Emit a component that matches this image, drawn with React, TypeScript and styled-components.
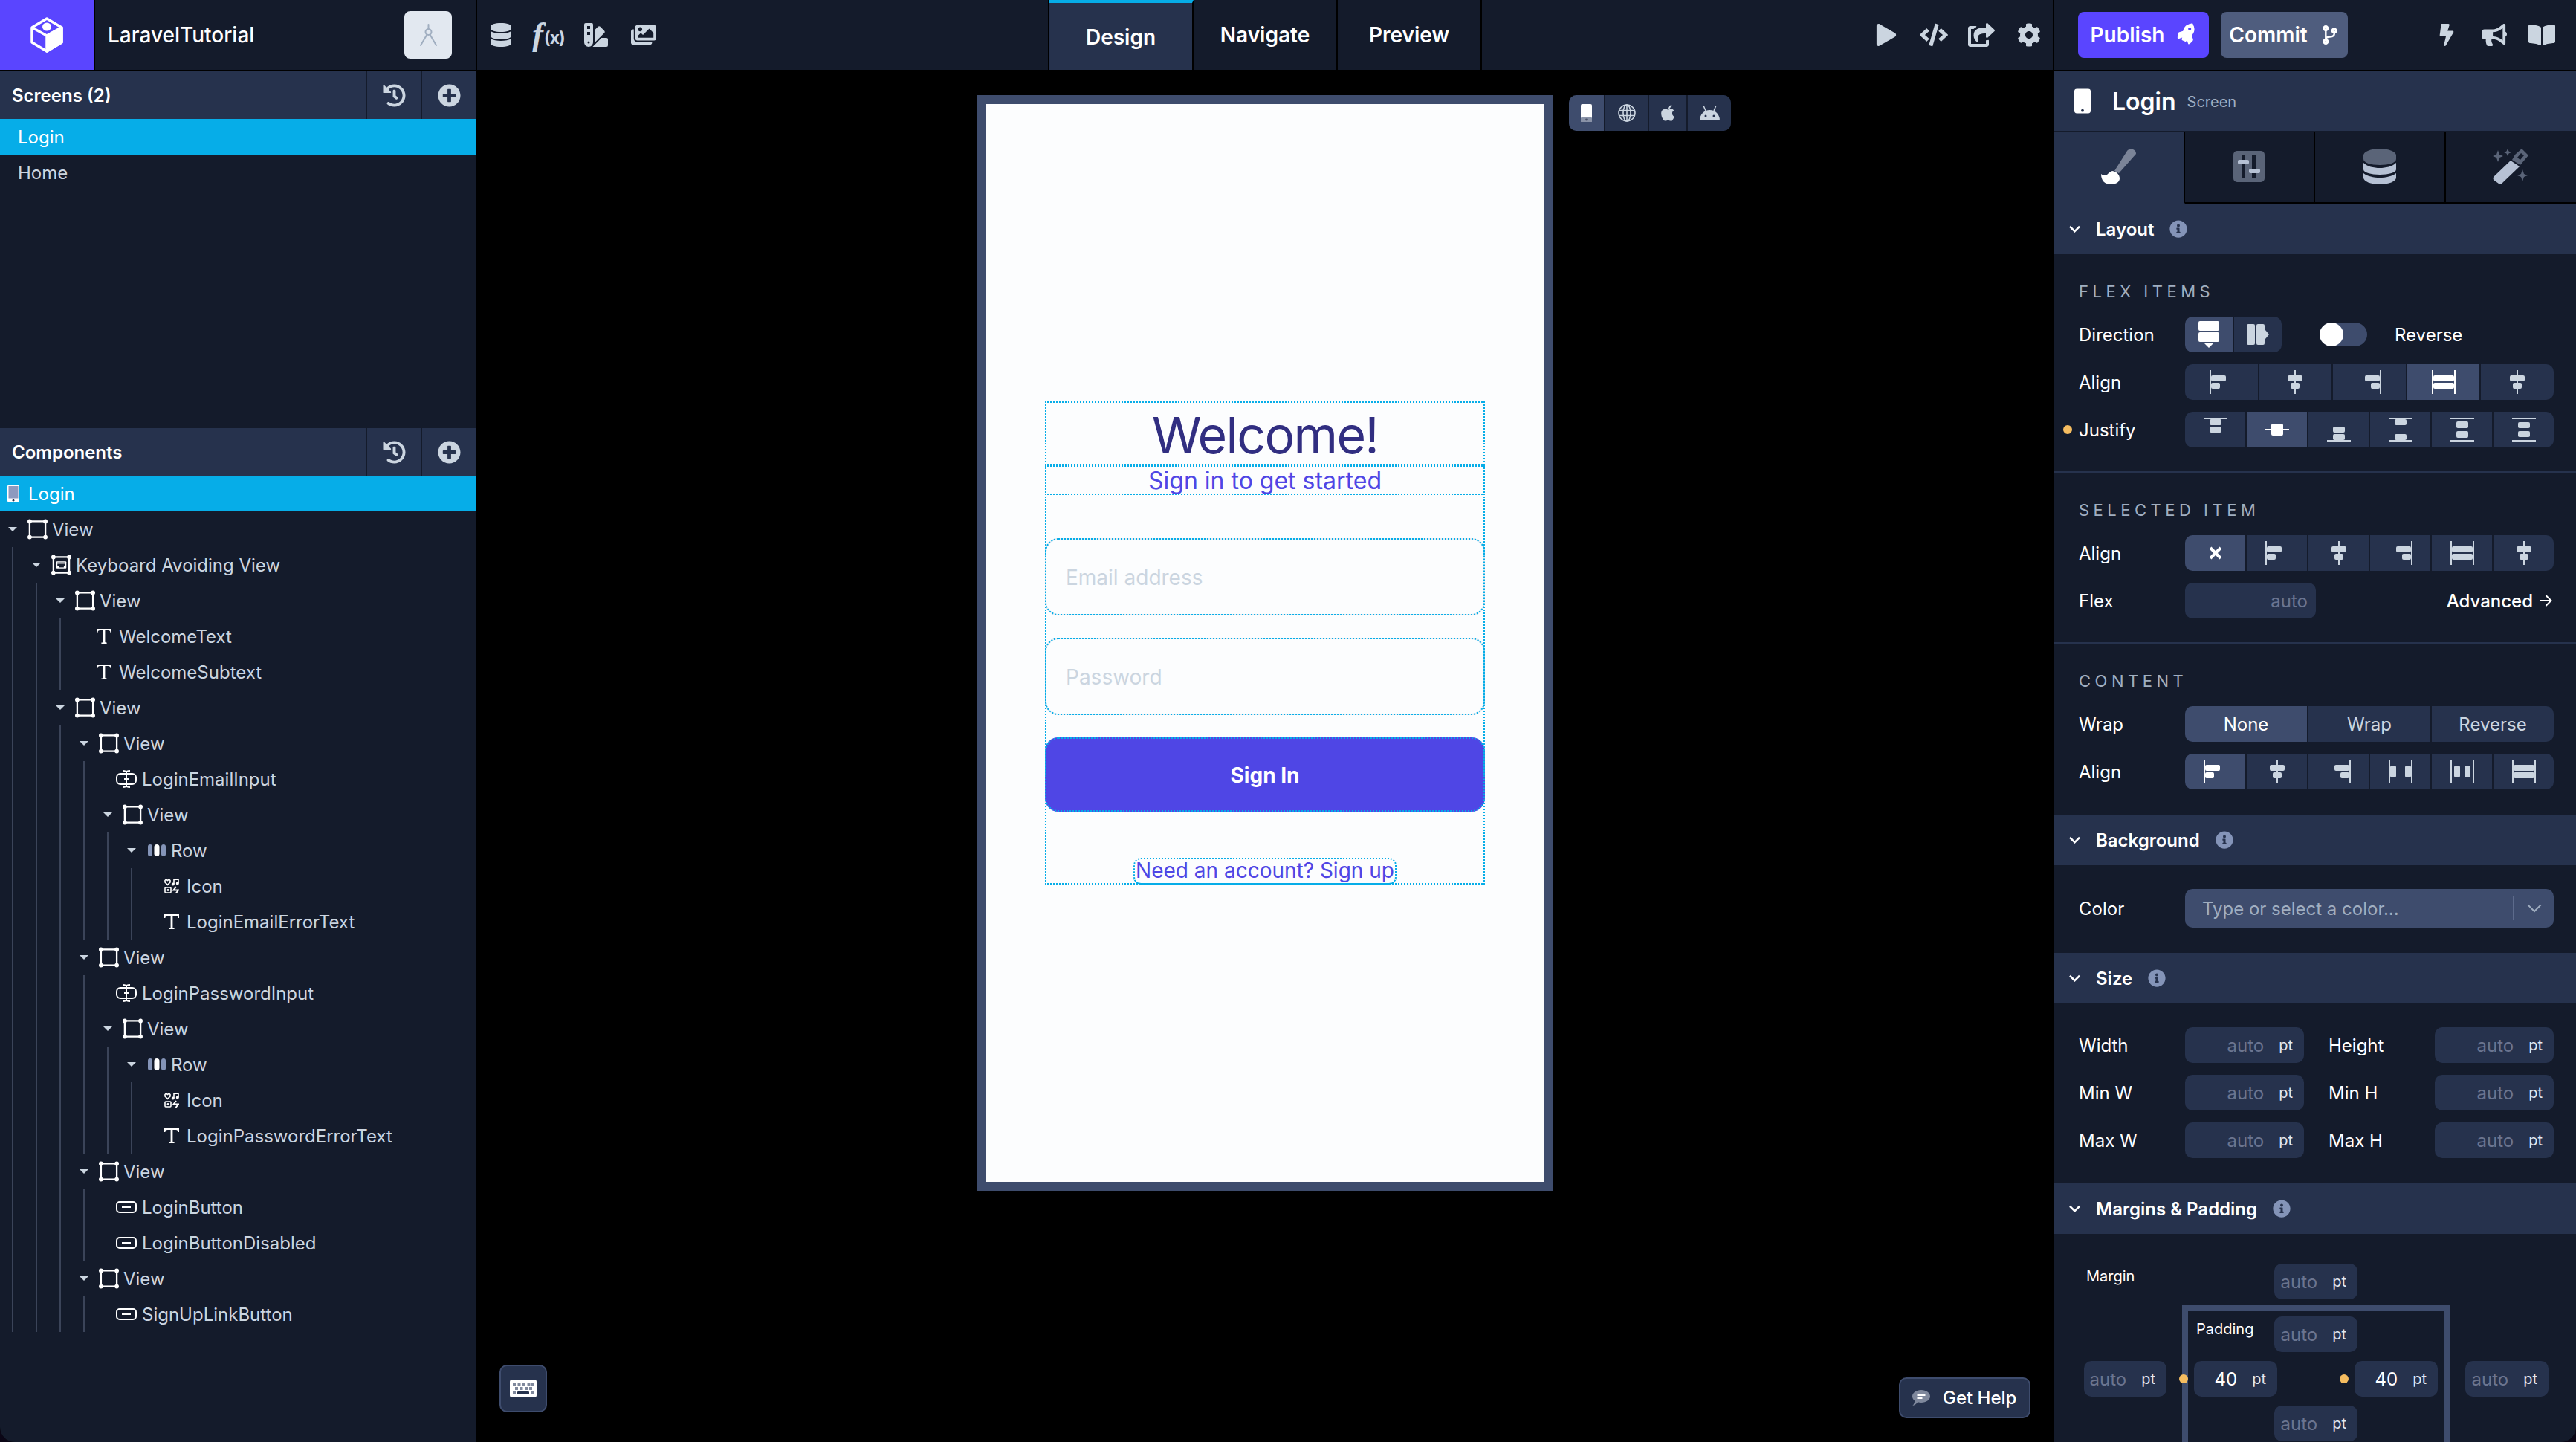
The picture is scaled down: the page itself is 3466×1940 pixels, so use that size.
import React, { ReactNode } from 'react'
import styled, { createGlobalStyle, css } from 'styled-components'
import {
  FaApple,
  FaBolt,
  FaBookOpen,
  FaBullhorn,
  FaCodeBranch,
  FaCode,
  FaCog,
  FaDatabase,
  FaHistory,
  FaImages,
  FaInfoCircle,
  FaPlay,
  FaPlusCircle,
  FaRocket,
  FaShareSquare,
  FaSwatchbook,
} from 'react-icons/fa'

const DARK = '#141b2b'
const MID = '#26324d'
const LIGHT = '#3e4c6d'
const CYAN = '#06ade8'
const SOFT = '#cbd5e0'
const INDIGO = '#4f46e5'
const AMBER = '#f6bd60'

const GlobalStyle = createGlobalStyle`
  html, body {
    margin: 0;
    padding: 0;
    background: #0b0616;
    overflow: hidden;
  }
  * {
    box-sizing: border-box;
  }
  body {
    font-family: Inter, "Noto Sans", sans-serif;
    color: #fff;
  }
`

const Page = styled.div`
  width: 3466px;
  height: 1940px;
  background: #000;
  display: flex;
  flex-direction: column;
  gap: 2px;
  overflow: hidden;
  border-radius: 0 0 20px 20px;
`

/* top bar */

const TopBar = styled.div`
  height: 94px;
  display: flex;
  gap: 2px;
  flex-shrink: 0;
`

const LogoCell = styled.div`
  width: 126px;
  background: #5a45ff;
  display: flex;
  align-items: center;
  justify-content: center;
`

const BrandCell = styled.div`
  width: 512px;
  background: ${DARK};
  display: flex;
  align-items: center;
  justify-content: space-between;
  padding: 0 32px 0 17px;
  font-size: 28px;
  font-weight: 500;
`

const Avatar = styled.div`
  width: 64px;
  height: 64px;
  border-radius: 8px;
  background: #e2e8f0;
  display: flex;
  align-items: center;
  justify-content: center;
`

const ToolsCell = styled.div`
  width: 2120px;
  background: ${DARK};
  display: flex;
  align-items: stretch;
`

const IconGroup = styled.div<{ $width?: number }>`
  display: flex;
  align-items: center;
  color: ${SOFT};
  ${(p) => p.$width && `width: ${p.$width}px;`}
`

const BarIcon = styled.div`
  width: 64px;
  height: 94px;
  display: flex;
  align-items: center;
  justify-content: center;
`

const FxIcon = styled.span`
  display: flex;
  align-items: center;
  font-family: "Liberation Serif", serif;
  font-style: italic;
  font-weight: 700;
  font-size: 44px;
  line-height: 1;
  span {
    font-family: Inter, sans-serif;
    font-style: normal;
    font-size: 23px;
    font-weight: 700;
    letter-spacing: -1px;
    margin: 8px 0 0 1px;
  }
`

const Tabs = styled.div`
  display: flex;
  border-left: 2px solid #000;
`

const Tab = styled.div<{ $active?: boolean }>`
  width: 194px;
  border-right: 2px solid #000;
  display: flex;
  align-items: center;
  justify-content: center;
  font-size: 28px;
  font-weight: 600;
  ${(p) =>
    p.$active &&
    css`
      background: ${MID};
      border-top: 4px solid ${CYAN};
      padding-top: 2px;
    `}
`

const Spacer = styled.div`
  flex: 1;
`

const PublishCell = styled.div`
  width: 702px;
  background: ${DARK};
  display: flex;
  align-items: center;
  padding: 0 14px 0 32px;
`

const ActionButton = styled.div<{ $width: number; $color: string }>`
  width: ${(p) => p.$width}px;
  height: 62px;
  border-radius: 8px;
  background: ${(p) => p.$color};
  display: flex;
  align-items: center;
  justify-content: center;
  gap: 17px;
  font-size: 28px;
  font-weight: 600;
  margin-right: 16px;
`

const Rocket = styled(FaRocket)`
  transform: rotate(-18deg);
`

/* main area */

const Body = styled.div`
  flex: 1;
  display: flex;
  min-height: 0;
`

const LeftPanel = styled.div`
  width: 640px;
  background: ${DARK};
  display: flex;
  flex-direction: column;
`

const PanelHeader = styled.div`
  height: 64px;
  background: ${MID};
  display: flex;
  flex-shrink: 0;
  font-size: 24px;
  font-weight: 600;
`

const PanelTitle = styled.div`
  flex: 1;
  display: flex;
  align-items: center;
  padding-left: 16px;
`

const PanelAction = styled.div`
  width: 74px;
  border-left: 2px solid ${DARK};
  display: flex;
  align-items: center;
  justify-content: center;
  color: ${SOFT};
`

const ScreensList = styled.div`
  height: 416px;
`

const ScreenRow = styled.div<{ $active?: boolean }>`
  height: 48px;
  display: flex;
  align-items: center;
  padding-left: 24px;
  font-size: 24px;
  color: ${(p) => (p.$active ? '#fff' : SOFT)};
  background: ${(p) => (p.$active ? CYAN : 'transparent')};
`

const RootRow = styled(ScreenRow)`
  padding-left: 10px;
  gap: 12px;
`

const TreeRow = styled.div`
  height: 48px;
  display: flex;
  align-items: center;
  font-size: 24px;
  color: ${SOFT};
  white-space: nowrap;
`

const Caret = styled.span`
  width: 0;
  height: 0;
  margin: 0 14px 0 11px;
  border-left: 6px solid transparent;
  border-right: 6px solid transparent;
  border-top: 6px solid ${SOFT};
  flex-shrink: 0;
`

const BranchIcon = styled.span`
  width: 27px;
  margin-right: 6px;
  display: flex;
  justify-content: center;
`

const LeafIcon = styled.span<{ $inset: number; $wide?: boolean }>`
  margin-left: ${(p) => p.$inset}px;
  margin-right: ${(p) => (p.$wide ? 7 : 10)}px;
  display: flex;
`

const TreeChildren = styled.div`
  margin-left: 16px;
  padding-left: 14px;
  border-left: 2px solid #3b4459;
`

/* canvas */

const Canvas = styled.div`
  flex: 1;
  position: relative;
  display: flex;
  justify-content: center;
  align-items: flex-start;
  padding-top: 32px;
`

const Phone = styled.div`
  position: relative;
  width: 774px;
  height: 1474px;
  border: 12px solid ${LIGHT};
  background: #fcfdfe;
  display: flex;
  flex-direction: column;
  justify-content: center;
  padding: 0 79px;
`

const Dotted = css`
  outline: 2px dotted ${CYAN};
  outline-offset: -2px;
`

const Container = styled.div`
  ${Dotted}
  height: 650px;
  display: flex;
  flex-direction: column;
  align-items: stretch;
`

const TitleBox = styled.div`
  ${Dotted}
  height: 86px;
  display: flex;
  align-items: center;
  justify-content: center;
  font-size: 68px;
  letter-spacing: -1.7px;
  color: #312e81;
  padding-top: 4px;
`

const SubtitleBox = styled.div`
  ${Dotted}
  height: 40px;
  margin-bottom: 58px;
  display: flex;
  align-items: center;
  justify-content: center;
  font-size: 32px;
  color: ${INDIGO};
`

const Field = styled.div`
  ${Dotted}
  height: 104px;
  margin-bottom: 30px;
  border: 2px solid #e8edf3;
  border-radius: 18px;
  display: flex;
  align-items: center;
  padding-left: 26px;
  padding-top: 2px;
  font-size: 28px;
  color: #cbd5e0;
`

const Submit = styled.div`
  ${Dotted}
  height: 100px;
  margin-bottom: 62px;
  background: ${INDIGO};
  border-radius: 18px;
  display: flex;
  align-items: center;
  justify-content: center;
  padding-top: 2px;
  font-size: 28px;
  font-weight: 700;
  color: #fff;
`

const LinkBox = styled.div`
  ${Dotted}
  align-self: center;
  width: 354px;
  height: 36px;
  border-radius: 10px;
  border-bottom: 2px solid ${CYAN};
  display: flex;
  align-items: center;
  justify-content: center;
  font-size: 28px;
  color: ${INDIGO};
  white-space: nowrap;
`

const DeviceBar = styled.div`
  position: absolute;
  top: -12px;
  left: calc(100% + 34px);
  width: 218px;
  height: 48px;
  display: grid;
  grid-template-columns: 47px 57px 50px 58px;
  gap: 2px;
  border-radius: 10px;
  overflow: hidden;
  background: ${DARK};
`

const DeviceButton = styled.div<{ $active?: boolean }>`
  display: flex;
  align-items: center;
  justify-content: center;
  color: ${SOFT};
  background: ${(p) => (p.$active ? LIGHT : MID)};
`

const KeyboardButton = styled.div`
  position: absolute;
  left: 32px;
  bottom: 40px;
  width: 64px;
  height: 64px;
  border: 2px solid ${LIGHT};
  border-radius: 10px;
  background: ${MID};
  display: flex;
  align-items: center;
  justify-content: center;
`

const HelpButton = styled.div`
  position: absolute;
  right: 32px;
  bottom: 32px;
  width: 177px;
  height: 55px;
  border: 2px solid ${LIGHT};
  border-radius: 10px;
  background: ${MID};
  display: flex;
  align-items: center;
  padding-left: 16px;
  gap: 17px;
  font-size: 24px;
  font-weight: 500;
`

/* right panel */

const RightPanel = styled.div`
  width: 702px;
  flex-shrink: 0;
  background: ${DARK};
  display: flex;
  flex-direction: column;
  overflow: hidden;
`

const ItemHeader = styled.div`
  height: 80px;
  background: ${MID};
  display: flex;
  align-items: center;
  padding-left: 27px;
  flex-shrink: 0;
`

const ItemName = styled.span`
  font-size: 32px;
  font-weight: 600;
  margin-left: 29px;
`

const ItemKind = styled.span`
  font-size: 20px;
  color: #a0aec0;
  margin-left: 15px;
  margin-top: 2px;
`

const ModeTabs = styled.div`
  height: 96px;
  flex-shrink: 0;
  margin-top: 2px;
  display: grid;
  grid-template-columns: repeat(4, 1fr);
`

const ModeTab = styled.div<{ $active?: boolean }>`
  display: flex;
  align-items: center;
  justify-content: center;
  padding-bottom: 2px;
  background: ${(p) => (p.$active ? MID : DARK)};
  border-bottom: 2px solid ${(p) => (p.$active ? MID : '#000')};
  border-right: 2px solid #000;
  &:last-child {
    border-right: 0;
  }
`

const SectionHeader = styled.div`
  height: 68px;
  flex-shrink: 0;
  background: ${MID};
  display: flex;
  align-items: center;
  padding-left: 20px;
  font-size: 24px;
  font-weight: 600;
  gap: 21px;
  .info {
    color: #8494b8;
  }
`

const Block = styled.div<{ $last?: boolean }>`
  padding: 36px 30px ${(p) => (p.$last ? 34 : 32)}px 33px;
  ${(p) => !p.$last && `border-bottom: 2px solid ${MID};`}
  display: flex;
  flex-direction: column;
  flex-shrink: 0;
  gap: 16px;
`

const BlockLabel = styled.div`
  height: 28px;
  margin-bottom: 4px;
  display: flex;
  align-items: center;
  font-size: 22px;
  letter-spacing: 5.5px;
  color: #a0aec0;
`

const FormRow = styled.div<{ $tall?: boolean }>`
  position: relative;
  height: ${(p) => (p.$tall ? 52 : 48)}px;
  display: flex;
  align-items: center;
`

const RowLabel = styled.div`
  width: 143px;
  flex-shrink: 0;
  font-size: 24px;
`

const ChangedDot = styled.span`
  position: absolute;
  width: 12px;
  height: 12px;
  border-radius: 50%;
  background: ${AMBER};
`

const JustifyDot = styled(ChangedDot)`
  left: -21px;
  top: 18px;
`

const Segments = styled.div<{ $count: number; $width?: number }>`
  display: grid;
  grid-template-columns: repeat(${(p) => p.$count}, 1fr);
  gap: 2px;
  width: ${(p) => p.$width ?? 496}px;
  height: 48px;
  border-radius: 10px;
  overflow: hidden;
`

const Segment = styled.div<{ $active?: boolean }>`
  display: flex;
  align-items: center;
  justify-content: center;
  font-size: 24px;
  background: ${(p) => (p.$active ? LIGHT : MID)};
  color: ${(p) => (p.$active ? '#fff' : SOFT)};
`

const Toggle = styled.div`
  width: 64px;
  height: 32px;
  margin: 0 37px 0 51px;
  border-radius: 16px;
  background: ${LIGHT};
  &::before {
    content: '';
    display: block;
    width: 32px;
    height: 32px;
    border-radius: 50%;
    background: #fff;
  }
`

const TextValue = styled.div`
  font-size: 24px;
`

const ValueBox = styled.div<{ $width: number; $pad?: number }>`
  width: ${(p) => p.$width}px;
  height: 48px;
  flex-shrink: 0;
  border-radius: 10px;
  background: ${MID};
  display: flex;
  align-items: center;
  justify-content: flex-end;
  gap: 20px;
  padding-right: ${(p) => p.$pad ?? 15}px;
  font-size: 24px;
`

const Placeholder = styled.span<{ $filled?: boolean }>`
  color: ${(p) => (p.$filled ? '#fff' : '#6b7590')};
`

const Unit = styled.span`
  font-size: 20px;
  color: #e2e8f0;
`

const AdvancedLink = styled.div`
  margin-left: auto;
  margin-right: 2px;
  display: flex;
  align-items: center;
  gap: 8px;
  font-size: 24px;
  font-weight: 500;
`

const ColorSelect = styled.div`
  width: 496px;
  height: 52px;
  border-radius: 10px;
  background: ${LIGHT};
  display: flex;
  align-items: center;
  padding-left: 23px;
  font-size: 24px;
  color: #a0aec0;
`

const ColorChevron = styled.div`
  margin-left: auto;
  width: 55px;
  height: 32px;
  border-left: 2px solid #5d6b8c;
  display: flex;
  align-items: center;
  justify-content: center;
`

const PlainBlock = styled.div`
  padding: 32px 30px 34px 33px;
  flex-shrink: 0;
`

const SizeBlock = styled.div`
  padding: 32px 30px 34px 33px;
  display: flex;
  flex-direction: column;
  gap: 16px;
  flex-shrink: 0;
`

const SizeRow = styled.div`
  display: flex;
  align-items: center;
  gap: 33px;
`

const SizePair = styled.div`
  display: flex;
  align-items: center;
`

const SpacingGrid = styled.div`
  padding: 40px 0 0 40px;
  display: grid;
  grid-template-columns: 111px 360px 112px;
  column-gap: 21px;
  grid-template-rows: 48px auto;
  row-gap: 8px;
`

const SmallLabel = styled.div`
  font-size: 20px;
  padding: 5px 0 0 3px;
`

const TopCell = styled.div`
  grid-column: 2;
  grid-row: 1;
  display: flex;
  justify-content: center;
`

const SideCell = styled.div<{ $column: number }>`
  grid-column: ${(p) => p.$column};
  grid-row: 2;
  padding-top: 75px;
`

const PaddingBox = styled.div`
  grid-column: 2;
  grid-row: 2;
  position: relative;
  border: 8px solid ${LIGHT};
  padding: 7px 8px 40px;
  display: grid;
  grid-template-columns: 112px 104px 112px;
  grid-template-rows: repeat(3, 48px);
  row-gap: 12px;
`

const CenterCell = styled.div<{ $row: number }>`
  grid-column: 2;
  grid-row: ${(p) => p.$row};
  display: flex;
  justify-content: center;
`

const InsetCell = styled.div<{ $column: number }>`
  grid-column: ${(p) => p.$column};
  grid-row: 2;
`

const SpacingDot = styled(ChangedDot)<{ $left: number }>`
  left: ${(p) => p.$left}px;
  top: 85px;
  z-index: 1;
`

/* icons */

const LogoMark = () => (
  <svg width="46" height="48" viewBox="0 0 46 48" fill="none" stroke="#fff" strokeWidth="3.5" strokeLinejoin="round">
    <path d="M23 2 43 14V34L23 46 3 34V14Z" />
    <path d="M3 14 23 25 43 14" />
    <path d="M23 25V46L43 34V14Z" fill="#fff" />
    <ellipse cx="23" cy="13" rx="5" ry="4.5" fill="#fff" strokeWidth="2" />
  </svg>
)

const CompassIcon = () => (
  <svg width="27" height="30" viewBox="0 0 27 30" fill="none" stroke="#a0aec0" strokeWidth="2" strokeLinecap="round">
    <circle cx="13.5" cy="11" r="4" />
    <path d="M13.5 1V7M11.5 14.5 3 29M15.5 14.5 24 29" />
  </svg>
)

const BoxIcon = ({ keyboard }: { keyboard?: boolean }) => (
  <svg width="28" height="28" viewBox="0 0 28 28" fill="none" stroke="#fff" strokeWidth="2.4">
    <rect x="3" y="3" width="22" height="22" />
    {[3, 25].map((x) =>
      [3, 25].map((y) => <circle key={`${x}-${y}`} cx={x} cy={y} r="3" fill="#fff" stroke="none" />)
    )}
    {keyboard && (
      <>
        <rect x="7" y="9" width="14" height="10" fill="#fff" stroke="none" rx="1" />
        <rect x="8.5" y="10.500" width="11" height="2" fill="#141b2b" stroke="none" />
        <rect x="8.5" y="13" width="11" height="2" fill="#141b2b" stroke="none" />
        <rect x="10.500" y="16" width="7" height="1.500" fill="#141b2b" stroke="none" />
      </>
    )}
  </svg>
)

const TextIcon = () => (
  <svg width="20" height="20" viewBox="0 0 20 20" fill="#fff">
    <path d="M0 0H20V5H18.600C18.400 3 17.600 2 15.500 2H11.400V17.400C11.400 18 12 18.400 13.600 18.600V20H6.400V18.600C8 18.400 8.600 18 8.600 17.400V2H4.500C2.400 2 1.600 3 1.400 5H0Z" />
  </svg>
)

const InputIcon = () => (
  <svg width="28" height="24" viewBox="0 0 28 24" fill="none" stroke="#fff" strokeWidth="2">
    <rect x="1" y="5" width="26" height="14" rx="5" />
    <path d="M9 1C12 1 14 1.500 14 3V21C14 22.500 12 23 9 23M19 1C16 1 14 1.500 14 3M19 23C16 23 14 22.500 14 21M11 12H17" />
  </svg>
)

const ButtonIcon = () => (
  <svg width="28" height="16" viewBox="0 0 28 16" fill="none" stroke="#fff" strokeWidth="2">
    <rect x="1" y="1" width="26" height="14" rx="4" />
    <path d="M8 8H20" />
  </svg>
)

const RowIcon = () => (
  <svg width="24" height="16" viewBox="0 0 24 16">
    <rect x="0" y="0" width="6" height="16" rx="3" fill="#8494b8" />
    <rect x="8.5" y="0" width="7" height="16" rx="3.500" fill="#fff" />
    <rect x="18" y="0" width="6" height="16" rx="3" fill="#8494b8" />
  </svg>
)

const WidgetIcon = () => (
  <svg width="20" height="20" viewBox="0 0 20 20" fill="none" stroke="#fff" strokeWidth="1.6">
    <path d="M4.500 8.400 1 5V2.500L2.500 1 4.500 2.400 6.500 1 8 2.500V5Z" />
    <path d="M13 7.500V1.500L19 1V6.500" />
    <circle cx="11.800" cy="7.500" r="1.200" fill="#fff" />
    <circle cx="17.800" cy="6.500" r="1.200" fill="#fff" />
    <rect x="1" y="12" width="8" height="7" rx="1" />
    <circle cx="5" cy="15.500" r="1.400" fill="#fff" stroke="none" />
    <path d="M16 11 12.500 15.500H19L15.500 20" strokeWidth="2" />
  </svg>
)

const PhoneGlyph = ({ width, height, screen }: { width: number; height: number; screen: string }) => (
  <svg width={width} height={height} viewBox="0 0 16 24">
    <rect width="16" height="24" rx="2.500" fill="#fff" />
    <rect x="1.500" y="2" width="13" height="16.500" fill={screen} />
    <circle cx="8" cy="21.200" r="1.400" fill="#26324d" />
  </svg>
)

const DevicePhone = () => (
  <svg width="15" height="24" viewBox="0 0 15 24">
    <rect width="15" height="24" rx="2" fill="#fff" />
    <rect y="18" width="15" height="6" rx="1" fill="#8a93a8" />
    <circle cx="7.500" cy="21" r="1.400" fill="#4a5268" />
  </svg>
)

const GlobeIcon = () => (
  <svg width="24" height="24" viewBox="0 0 24 24" fill="none" stroke="#cbd5e0" strokeWidth="1.6">
    <circle cx="12" cy="12" r="11" />
    <ellipse cx="12" cy="12" rx="5" ry="11" />
    <path d="M12 1V23M1.500 8.500H22.500M1.500 15.500H22.500" />
  </svg>
)

const AndroidIcon = () => (
  <svg width="27" height="20" viewBox="0 0 27 20" fill="#cbd5e0">
    <path d="M0 20C0 12 6 6 13.500 6S27 12 27 20Z" />
    <path d="M8 7 5 0M19 7 22 0" stroke="#cbd5e0" strokeWidth="1.500" />
    <circle cx="8" cy="14" r="1.500" fill="#26324d" />
    <circle cx="19" cy="14" r="1.500" fill="#26324d" />
  </svg>
)

const KeyboardIcon = () => (
  <svg width="36" height="24" viewBox="0 0 36 24">
    <rect width="36" height="24" rx="3" fill="#fff" />
    {[4, 10.5, 17, 23.5, 29].map((x) => (
      <rect key={x} x={x} y="4" width="4" height="4" fill="#7f889c" />
    ))}
    {[7, 13.5, 20, 26].map((x) => (
      <rect key={x} x={x} y="10" width="4" height="4" fill="#7f889c" />
    ))}
    <rect x="4" y="16" width="4" height="4" fill="#7f889c" />
    <rect x="10" y="16" width="16" height="4" rx="1" fill="#26324d" />
    <rect x="28" y="16" width="4" height="4" fill="#7f889c" />
  </svg>
)

const ChatIcon = () => (
  <svg width="24" height="22" viewBox="0 0 24 22">
    <path d="M12 0C18.600 0 24 3.800 24 8.500S18.600 17 12 17C10.400 17 8.800 16.800 7.400 16.300 5.400 18.500 2.800 21 .4 21 2 19.400 3 17.200 3.200 14.500 1.200 13 0 10.900 0 8.500 0 3.800 5.400 0 12 0Z" fill="#7f889c" />
    <rect x="6.500" y="6" width="11" height="2" fill="#fff" />
    <rect x="6.500" y="10" width="7" height="2" fill="#fff" />
  </svg>
)

const BrushIcon = () => (
  <svg width="47" height="48" viewBox="0 0 47 48">
    <path d="M35 3C37 0 47 -1 47 7L24 33 18 30Z" fill="#7b8498" />
    <path d="M15 30C21 31 25 35 25 40 25 45 20 48 13 48 5 48 0 43 0 34 2 36 5 37 8 35 10 33 12 31 15 30Z" fill="#fff" />
  </svg>
)

const SlidersIcon = () => (
  <svg width="42" height="42" viewBox="0 0 42 42">
    <rect width="42" height="42" rx="5" fill="#5a6478" />
    <rect x="11" y="6" width="5" height="30" fill="#141b2b" />
    <rect x="25" y="6" width="5" height="30" fill="#141b2b" />
    <rect x="6" y="12" width="15" height="6" rx="2" fill="#b6c1d4" />
    <rect x="21" y="24" width="15" height="6" rx="2" fill="#b6c1d4" />
  </svg>
)

const DataIcon = () => (
  <svg width="44" height="48" viewBox="0 0 44 48">
    <path d="M0 9C0 4 10 0 22 0S44 4 44 9V14C44 19 34 22 22 22S0 19 0 14Z" fill="#5a6478" />
    <path d="M0 19C5 24 14 26 22 26S39 24 44 19V28C44 32 34 35 22 35S0 32 0 28Z" fill="#b6c1d4" />
    <path d="M0 33C5 37 14 39 22 39S39 37 44 33V39C44 44 34 48 22 48S0 44 0 39Z" fill="#b6c1d4" />
  </svg>
)

const WandIcon = () => (
  <svg width="48" height="48" viewBox="0 0 48 48">
    <path d="M30 8 39 0 48 9 37 22 26 15ZM38 6 33 12 37 15 42 9Z" fill="#5a6478" fillRule="evenodd" />
    <path d="M24 16 36 24 12 47Q10 48 8 47L1 42Q0 40 1 38Z" fill="#b6c1d4" />
    <path d="M7 2 9 8 14 10 9 12 7 18 5 12 0 10 5 8ZM20 0 21.500 3.500 25 5 21.500 6.500 20 10 18.500 6.500 15 5 18.500 3.500ZM40 28 42 34 47 36 42 38 40 44 38 38 33 36 38 34Z" fill="#5a6478" />
  </svg>
)

const SectionChevron = ({ size = 15, color = '#fff', strokeWidth = 2.5 }) => (
  <svg width={size} height={size * 0.7} viewBox="0 0 15 10" fill="none" stroke={color} strokeWidth={strokeWidth}>
    <path d="M1 1.500 7.500 8 14 1.500" />
  </svg>
)

const ArrowIcon = () => (
  <svg width="18" height="18" viewBox="0 0 18 18" fill="none" stroke="#fff" strokeWidth="2">
    <path d="M1 9H16M9.500 2 16.500 9 9.500 16" />
  </svg>
)

const DirectionColumn = () => (
  <svg width="28" height="36" viewBox="0 0 28 36" fill="currentColor">
    <rect width="28" height="13" rx="2" />
    <rect y="15" width="28" height="13" rx="2" />
    <path d="M8 30H20L14 36Z" />
  </svg>
)

const DirectionRow = () => (
  <svg width="30" height="28" viewBox="0 0 30 28" fill="currentColor">
    <rect width="11" height="28" rx="2" />
    <rect x="13" width="11" height="28" rx="2" />
    <path d="M25 8 30 14 25 20Z" />
  </svg>
)

const bar = (x: number, y: number, width: number, height: number) => (
  <rect key={`${x}-${y}`} x={x} y={y} width={width} height={height} rx="2" />
)
const vLine = (x: number) => <rect key={`v${x}`} x={x} y="0" width="2" height="32" />
const hLine = (y: number) => <rect key={`h${y}`} x="0" y={y} width="32" height="2" />

const alignGlyphs: Record<string, ReactNode[]> = {
  hStart: [vLine(0), bar(2, 7, 20, 8), bar(2, 17, 12, 8)],
  hCenter: [vLine(15), bar(6, 7, 20, 8), bar(10, 17, 12, 8)],
  hEnd: [vLine(30), bar(10, 7, 20, 8), bar(18, 17, 12, 8)],
  hStretch: [vLine(0), vLine(30), bar(2, 7, 28, 8), bar(2, 17, 28, 8)],
  hBetween: [vLine(0), vLine(30), bar(2, 8, 8, 16), bar(22, 8, 8, 16)],
  hAround: [vLine(0), vLine(30), bar(5, 8, 8, 16), bar(19, 8, 8, 16)],
  vStart: [hLine(0), bar(8, 2, 16, 8), bar(8, 12, 16, 8)],
  vCenter: [hLine(15), bar(8, 8, 16, 16)],
  vEnd: [hLine(30), bar(8, 12, 16, 8), bar(8, 22, 16, 8)],
  vBetween: [hLine(0), hLine(30), bar(8, 2, 16, 8), bar(8, 22, 16, 8)],
  vAround: [hLine(0), hLine(30), bar(8, 5, 16, 9), bar(8, 18, 16, 9)],
  vEvenly: [hLine(0), hLine(30), bar(8, 6, 16, 8), bar(8, 18, 16, 8)],
}

const AlignIcon = ({ kind }: { kind: string }) => (
  <svg width="32" height="32" viewBox="0 0 32 32" fill="currentColor">
    {alignGlyphs[kind]}
  </svg>
)

const CrossIcon = () => (
  <svg width="18" height="18" viewBox="0 0 18 18" fill="none" stroke="currentColor" strokeWidth="4">
    <path d="M2 2 16 16M16 2 2 16" />
  </svg>
)

/* tree data */

type TreeNode = {
  label: string
  kind: 'view' | 'keyboard' | 'row' | 'text' | 'input' | 'button' | 'icon'
  inset?: number
  children?: TreeNode[]
}

const errorRow = (label: string): TreeNode => ({
  label: 'View',
  kind: 'view',
  children: [
    {
      label: 'Row',
      kind: 'row',
      children: [
        { label: 'Icon', kind: 'icon', inset: 29 },
        { label, kind: 'text', inset: 29 },
      ],
    },
  ],
})

const tree: TreeNode = {
  label: 'View',
  kind: 'view',
  children: [
    {
      label: 'Keyboard Avoiding View',
      kind: 'keyboard',
      children: [
        {
          label: 'View',
          kind: 'view',
          children: [
            { label: 'WelcomeText', kind: 'text', inset: 34 },
            { label: 'WelcomeSubtext', kind: 'text', inset: 34 },
          ],
        },
        {
          label: 'View',
          kind: 'view',
          children: [
            {
              label: 'View',
              kind: 'view',
              children: [{ label: 'LoginEmailInput', kind: 'input', inset: 28 }, errorRow('LoginEmailErrorText')],
            },
            {
              label: 'View',
              kind: 'view',
              children: [{ label: 'LoginPasswordInput', kind: 'input', inset: 28 }, errorRow('LoginPasswordErrorText')],
            },
            {
              label: 'View',
              kind: 'view',
              children: [
                { label: 'LoginButton', kind: 'button', inset: 28 },
                { label: 'LoginButtonDisabled', kind: 'button', inset: 28 },
              ],
            },
            {
              label: 'View',
              kind: 'view',
              children: [{ label: 'SignUpLinkButton', kind: 'button', inset: 28 }],
            },
          ],
        },
      ],
    },
  ],
}

const nodeIcons: Record<TreeNode['kind'], ReactNode> = {
  view: <BoxIcon />,
  keyboard: <BoxIcon keyboard />,
  row: <RowIcon />,
  text: <TextIcon />,
  input: <InputIcon />,
  button: <ButtonIcon />,
  icon: <WidgetIcon />,
}

const Tree = ({ node }: { node: TreeNode }) => {
  if (!node.children) {
    return (
      <TreeRow>
        <LeafIcon $inset={node.inset ?? 0} $wide={node.kind === 'input' || node.kind === 'button'}>
          {nodeIcons[node.kind]}
        </LeafIcon>
        {node.label}
      </TreeRow>
    )
  }
  return (
    <>
      <TreeRow>
        <Caret />
        <BranchIcon>{nodeIcons[node.kind]}</BranchIcon>
        {node.label}
      </TreeRow>
      <TreeChildren>
        {node.children.map((child, i) => (
          <Tree key={i} node={child} />
        ))}
      </TreeChildren>
    </>
  )
}

const Segmented = ({ kinds, active }: { kinds: string[]; active: number }) => (
  <Segments $count={kinds.length}>
    {kinds.map((kind, i) => (
      <Segment key={i} $active={i === active}>
        {kind === 'cross' ? <CrossIcon /> : <AlignIcon kind={kind} />}
      </Segment>
    ))}
  </Segments>
)

const Section = ({ title }: { title: string }) => (
  <SectionHeader>
    <SectionChevron />
    <span>{title}</span>
    <FaInfoCircle className="info" size={24} />
  </SectionHeader>
)

const Value = ({ width, pad, value }: { width: number; pad?: number; value?: string }) => (
  <ValueBox $width={width} $pad={pad}>
    <Placeholder $filled={!!value}>{value ?? 'auto'}</Placeholder>
    <Unit>pt</Unit>
  </ValueBox>
)

const sizeRows = [
  ['Width', 'Height'],
  ['Min W', 'Min H'],
  ['Max W', 'Max H'],
]

const App = () => {
  return (
    <Page>
      <GlobalStyle />
      <TopBar>
        <LogoCell>
          <LogoMark />
        </LogoCell>
        <BrandCell>
          LaravelTutorial
          <Avatar>
            <CompassIcon />
          </Avatar>
        </BrandCell>
        <ToolsCell>
          <IconGroup $width={768}>
            <BarIcon>
              <FaDatabase size={32} />
            </BarIcon>
            <BarIcon>
              <FxIcon>
                f<span>(x)</span>
              </FxIcon>
            </BarIcon>
            <BarIcon>
              <FaSwatchbook size={32} />
            </BarIcon>
            <BarIcon>
              <FaImages size={34} />
            </BarIcon>
          </IconGroup>
          <Tabs>
            <Tab $active>Design</Tab>
            <Tab>Navigate</Tab>
            <Tab>Preview</Tab>
          </Tabs>
          <Spacer />
          <IconGroup>
            <BarIcon>
              <FaPlay size={30} />
            </BarIcon>
            <BarIcon>
              <FaCode size={38} />
            </BarIcon>
            <BarIcon>
              <FaShareSquare size={36} />
            </BarIcon>
            <BarIcon>
              <FaCog size={32} />
            </BarIcon>
          </IconGroup>
        </ToolsCell>
        <PublishCell>
          <ActionButton $width={176} $color="#5a45ff">
            Publish
            <Rocket size={26} />
          </ActionButton>
          <ActionButton $width={171} $color="#4f5d7e">
            Commit
            <FaCodeBranch size={26} />
          </ActionButton>
          <Spacer />
          <IconGroup>
            <BarIcon>
              <FaBolt size={30} />
            </BarIcon>
            <BarIcon>
              <FaBullhorn size={34} />
            </BarIcon>
            <BarIcon>
              <FaBookOpen size={36} />
            </BarIcon>
          </IconGroup>
        </PublishCell>
      </TopBar>
      <Body>
        <LeftPanel>
          <PanelHeader>
            <PanelTitle>Screens (2)</PanelTitle>
            <PanelAction>
              <FaHistory size={31} />
            </PanelAction>
            <PanelAction>
              <FaPlusCircle size={31} />
            </PanelAction>
          </PanelHeader>
          <ScreensList>
            <ScreenRow $active>Login</ScreenRow>
            <ScreenRow>Home</ScreenRow>
          </ScreensList>
          <PanelHeader>
            <PanelTitle>Components</PanelTitle>
            <PanelAction>
              <FaHistory size={31} />
            </PanelAction>
            <PanelAction>
              <FaPlusCircle size={31} />
            </PanelAction>
          </PanelHeader>
          <RootRow $active>
            <PhoneGlyph width={16} height={24} screen="#8e9abf" />
            Login
          </RootRow>
          <Tree node={tree} />
        </LeftPanel>
        <Canvas>
          <Phone>
            <Container>
              <TitleBox>Welcome!</TitleBox>
              <SubtitleBox>Sign in to get started</SubtitleBox>
              <Field>Email address</Field>
              <Field>Password</Field>
              <Submit>Sign In</Submit>
              <LinkBox>Need an account? Sign up</LinkBox>
            </Container>
            <DeviceBar>
              <DeviceButton $active>
                <DevicePhone />
              </DeviceButton>
              <DeviceButton>
                <GlobeIcon />
              </DeviceButton>
              <DeviceButton>
                <FaApple size={24} />
              </DeviceButton>
              <DeviceButton>
                <AndroidIcon />
              </DeviceButton>
            </DeviceBar>
          </Phone>
          <KeyboardButton>
            <KeyboardIcon />
          </KeyboardButton>
          <HelpButton>
            <ChatIcon />
            Get Help
          </HelpButton>
        </Canvas>
        <RightPanel>
          <ItemHeader>
            <PhoneGlyph width={22} height={36} screen="#fff" />
            <ItemName>Login</ItemName>
            <ItemKind>Screen</ItemKind>
          </ItemHeader>
          <ModeTabs>
            <ModeTab $active>
              <BrushIcon />
            </ModeTab>
            <ModeTab>
              <SlidersIcon />
            </ModeTab>
            <ModeTab>
              <DataIcon />
            </ModeTab>
            <ModeTab>
              <WandIcon />
            </ModeTab>
          </ModeTabs>
          <Section title="Layout" />
          <Block>
            <BlockLabel>FLEX ITEMS</BlockLabel>
            <FormRow>
              <RowLabel>Direction</RowLabel>
              <Segments $count={2} $width={130}>
                <Segment $active>
                  <DirectionColumn />
                </Segment>
                <Segment>
                  <DirectionRow />
                </Segment>
              </Segments>
              <Toggle />
              <TextValue>Reverse</TextValue>
            </FormRow>
            <FormRow>
              <RowLabel>Align</RowLabel>
              <Segmented kinds={['hStart', 'hCenter', 'hEnd', 'hStretch', 'hCenter']} active={3} />
            </FormRow>
            <FormRow>
              <JustifyDot />
              <RowLabel>Justify</RowLabel>
              <Segmented kinds={['vStart', 'vCenter', 'vEnd', 'vBetween', 'vAround', 'vEvenly']} active={1} />
            </FormRow>
          </Block>
          <Block>
            <BlockLabel>SELECTED ITEM</BlockLabel>
            <FormRow>
              <RowLabel>Align</RowLabel>
              <Segmented kinds={['cross', 'hStart', 'hCenter', 'hEnd', 'hStretch', 'hCenter']} active={0} />
            </FormRow>
            <FormRow>
              <RowLabel>Flex</RowLabel>
              <ValueBox $width={176} $pad={11}>
                <Placeholder>auto</Placeholder>
              </ValueBox>
              <AdvancedLink>
                Advanced
                <ArrowIcon />
              </AdvancedLink>
            </FormRow>
          </Block>
          <Block $last>
            <BlockLabel>CONTENT</BlockLabel>
            <FormRow>
              <RowLabel>Wrap</RowLabel>
              <Segments $count={3}>
                <Segment $active>None</Segment>
                <Segment>Wrap</Segment>
                <Segment>Reverse</Segment>
              </Segments>
            </FormRow>
            <FormRow>
              <RowLabel>Align</RowLabel>
              <Segmented kinds={['hStart', 'hCenter', 'hEnd', 'hBetween', 'hAround', 'hStretch']} active={0} />
            </FormRow>
          </Block>
          <Section title="Background" />
          <PlainBlock>
            <FormRow $tall>
              <RowLabel>Color</RowLabel>
              <ColorSelect>
                Type or select a color...
                <ColorChevron>
                  <SectionChevron size={20} color="#a0aec0" strokeWidth={1.5} />
                </ColorChevron>
              </ColorSelect>
            </FormRow>
          </PlainBlock>
          <Section title="Size" />
          <SizeBlock>
            {sizeRows.map(([left, right]) => (
              <SizeRow key={left}>
                <SizePair>
                  <RowLabel>{left}</RowLabel>
                  <Value width={160} />
                </SizePair>
                <SizePair>
                  <RowLabel>{right}</RowLabel>
                  <Value width={160} />
                </SizePair>
              </SizeRow>
            ))}
          </SizeBlock>
          <Section title="Margins & Padding" />
          <SpacingGrid>
            <SmallLabel>Margin</SmallLabel>
            <TopCell>
              <Value width={112} />
            </TopCell>
            <SideCell $column={1}>
              <Value width={111} />
            </SideCell>
            <PaddingBox>
              <SpacingDot $left={-12} />
              <SpacingDot $left={204} />
              <SmallLabel>Padding</SmallLabel>
              <CenterCell $row={1}>
                <Value width={112} />
              </CenterCell>
              <InsetCell $column={1}>
                <Value width={112} value="40" />
              </InsetCell>
              <InsetCell $column={3}>
                <Value width={112} value="40" />
              </InsetCell>
              <CenterCell $row={3}>
                <Value width={112} />
              </CenterCell>
            </PaddingBox>
            <SideCell $column={3}>
              <Value width={112} />
            </SideCell>
          </SpacingGrid>
        </RightPanel>
      </Body>
    </Page>
  )
}

export default App
